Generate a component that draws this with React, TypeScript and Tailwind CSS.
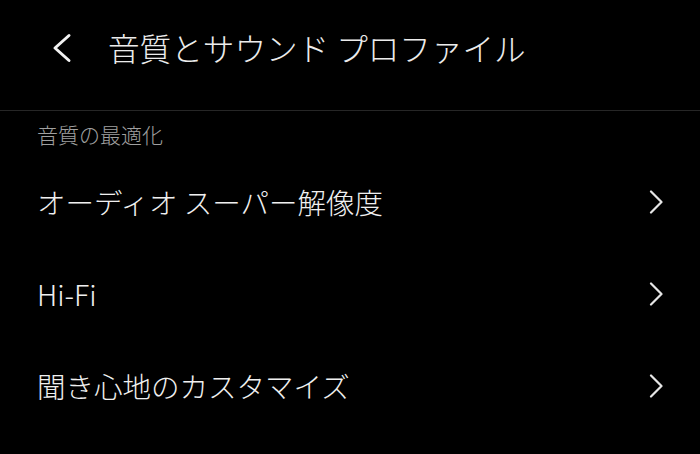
const items = ["オーディオ スーパー解像度", "Hi-Fi", "聞き心地のカスタマイズ"];

function ChevronRight() {
  return (
    <svg width="15" height="24" viewBox="0 0 15 24" fill="none" className="shrink-0">
      <path d="M2 1.5 L12.5 12 L2 22.5" stroke="#e6e6e6" strokeWidth="2.2" strokeLinecap="round" strokeLinejoin="round" />
    </svg>
  );
}

export default function App() {
  return (
    <div
      className="w-[700px] h-[454px] bg-black text-[#f0f0f0] overflow-hidden"
      style={{ fontFamily: '"Noto Sans CJK JP", "Noto Sans", sans-serif' }}
    >
      {/* ヘッダー */}
      <div className="h-[111px] border-b border-[#262626]">
        <div className="h-[95px] flex items-center pl-[51px]">
          <svg width="22" height="30" viewBox="0 0 22 30" fill="none" className="shrink-0">
            <path d="M18 2.5 L4 15 L18 27.5" stroke="#f2f2f2" strokeWidth="3" strokeLinecap="round" strokeLinejoin="round" />
          </svg>
          <h1 className="ml-[35px] text-[31.6px] leading-none text-[#ececec] font-light">
            音質とサウンド プロファイル
          </h1>
        </div>
      </div>

      {/* セクション */}
      <div className="pt-[9px] px-[37px]">
        <div className="text-[21px] leading-[28px] text-[#a0a0a0] font-light">音質の最適化</div>
      </div>

      <div className="mt-[8px]">
        {items.map((label) => (
          <div key={label} className="h-[92px] flex items-center justify-between pl-[37px] pr-[36px]">
            <span className="text-[28.5px] leading-none font-light">{label}</span>
            <ChevronRight />
          </div>
        ))}
      </div>
    </div>
  );
}
